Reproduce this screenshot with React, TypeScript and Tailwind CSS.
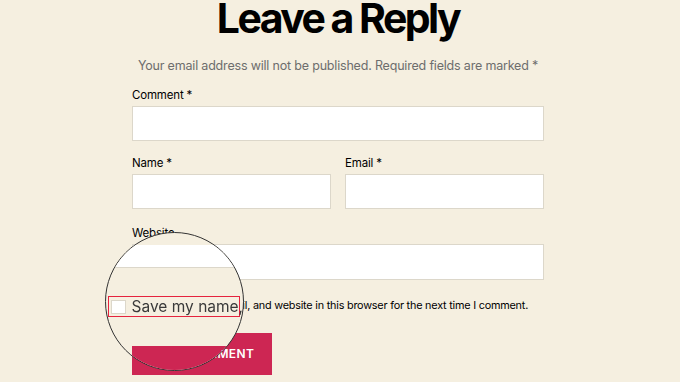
import React from 'react'

const font = { fontFamily: 'Inter, "Noto Sans", sans-serif' }

function Field({ label, className = '', inputClass = 'h-[35px]' }: { label: string; className?: string; inputClass?: string }) {
  return (
    <div className={className}>
      <label className="block h-[18px] text-[11.5px] leading-[18px] tracking-[-0.015em] text-black">{label}</label>
      <div className={`mt-[2px] border border-[#dcd7ca] bg-white ${inputClass}`} />
    </div>
  )
}

function Magnifier() {
  // zoomed-in view of the cookie-consent checkbox
  return (
    <div className="absolute left-[105px] top-[232px] flex h-[139px] w-[139px] flex-col overflow-hidden rounded-full border border-[#333] bg-[#f5efe0]">
      <div className="mt-[12px] h-[23px] shrink-0 border-b border-[#dcd7ca] bg-white" />
      <div className="ml-[2px] mt-[28px] flex h-[21px] w-[132px] shrink-0 items-center gap-[6px] border-[1.5px] border-[#e5233e] pl-[1.5px]">
        <div className="h-[14px] w-[15px] shrink-0 border border-[#dcd7ca] bg-white" />
        <span className="whitespace-nowrap text-[15.5px] leading-[18px] text-[#3a3a3a] blur-[0.3px]">
          Save my name,
        </span>
      </div>
      <div className="ml-[26px] mt-[29px] flex-1 bg-[#cd2653] pl-[89px] pt-[3px]">
        <span className="block whitespace-nowrap text-[13px] font-bold leading-[13px] tracking-wide text-white">MENT</span>
      </div>
    </div>
  )
}

export default function App() {
  return (
    <div className="relative h-[382px] w-[680px] overflow-hidden bg-[#f5efe0]" style={font}>
      <div className="ml-[132px] w-[412px]">
        <h1 className="-mt-[2px] h-[41px] whitespace-nowrap text-center text-[41px] font-bold leading-[40px] tracking-[-0.062em] text-black">
          Leave a Reply
        </h1>
        <p className="mt-[17px] h-[20px] whitespace-nowrap text-center text-[12.5px] leading-[20px] tracking-[-0.015em] text-[#6d6d6d]">
          Your email address will not be published. Required fields are marked *
        </p>
        <Field label="Comment *" className="mt-[10px]" />
        <div className="mt-[13px] flex gap-[14px]">
          <Field label="Name *" className="w-[199px]" />
          <Field label="Email *" className="w-[199px]" />
        </div>
        <Field label="Website" className="mt-[15px]" inputClass="h-[36px]" />
        <div className="mt-[15px] flex h-[20px] items-center">
          <div className="h-[11px] w-[11px] shrink-0 border border-[#dcd7ca] bg-white" />
          <span className="whitespace-nowrap text-[10.85px] leading-[20px] tracking-[-0.02em] text-black">
            Save my name, email, and website in this browser for the next time I comment.
          </span>
        </div>
        <button className="mt-[18px] flex h-[42px] w-[140px] items-center justify-center bg-[#cd2653] text-[12px] font-semibold tracking-[0.03em] text-white">
          POST COMMENT
        </button>
      </div>
      <Magnifier />
    </div>
  )
}
